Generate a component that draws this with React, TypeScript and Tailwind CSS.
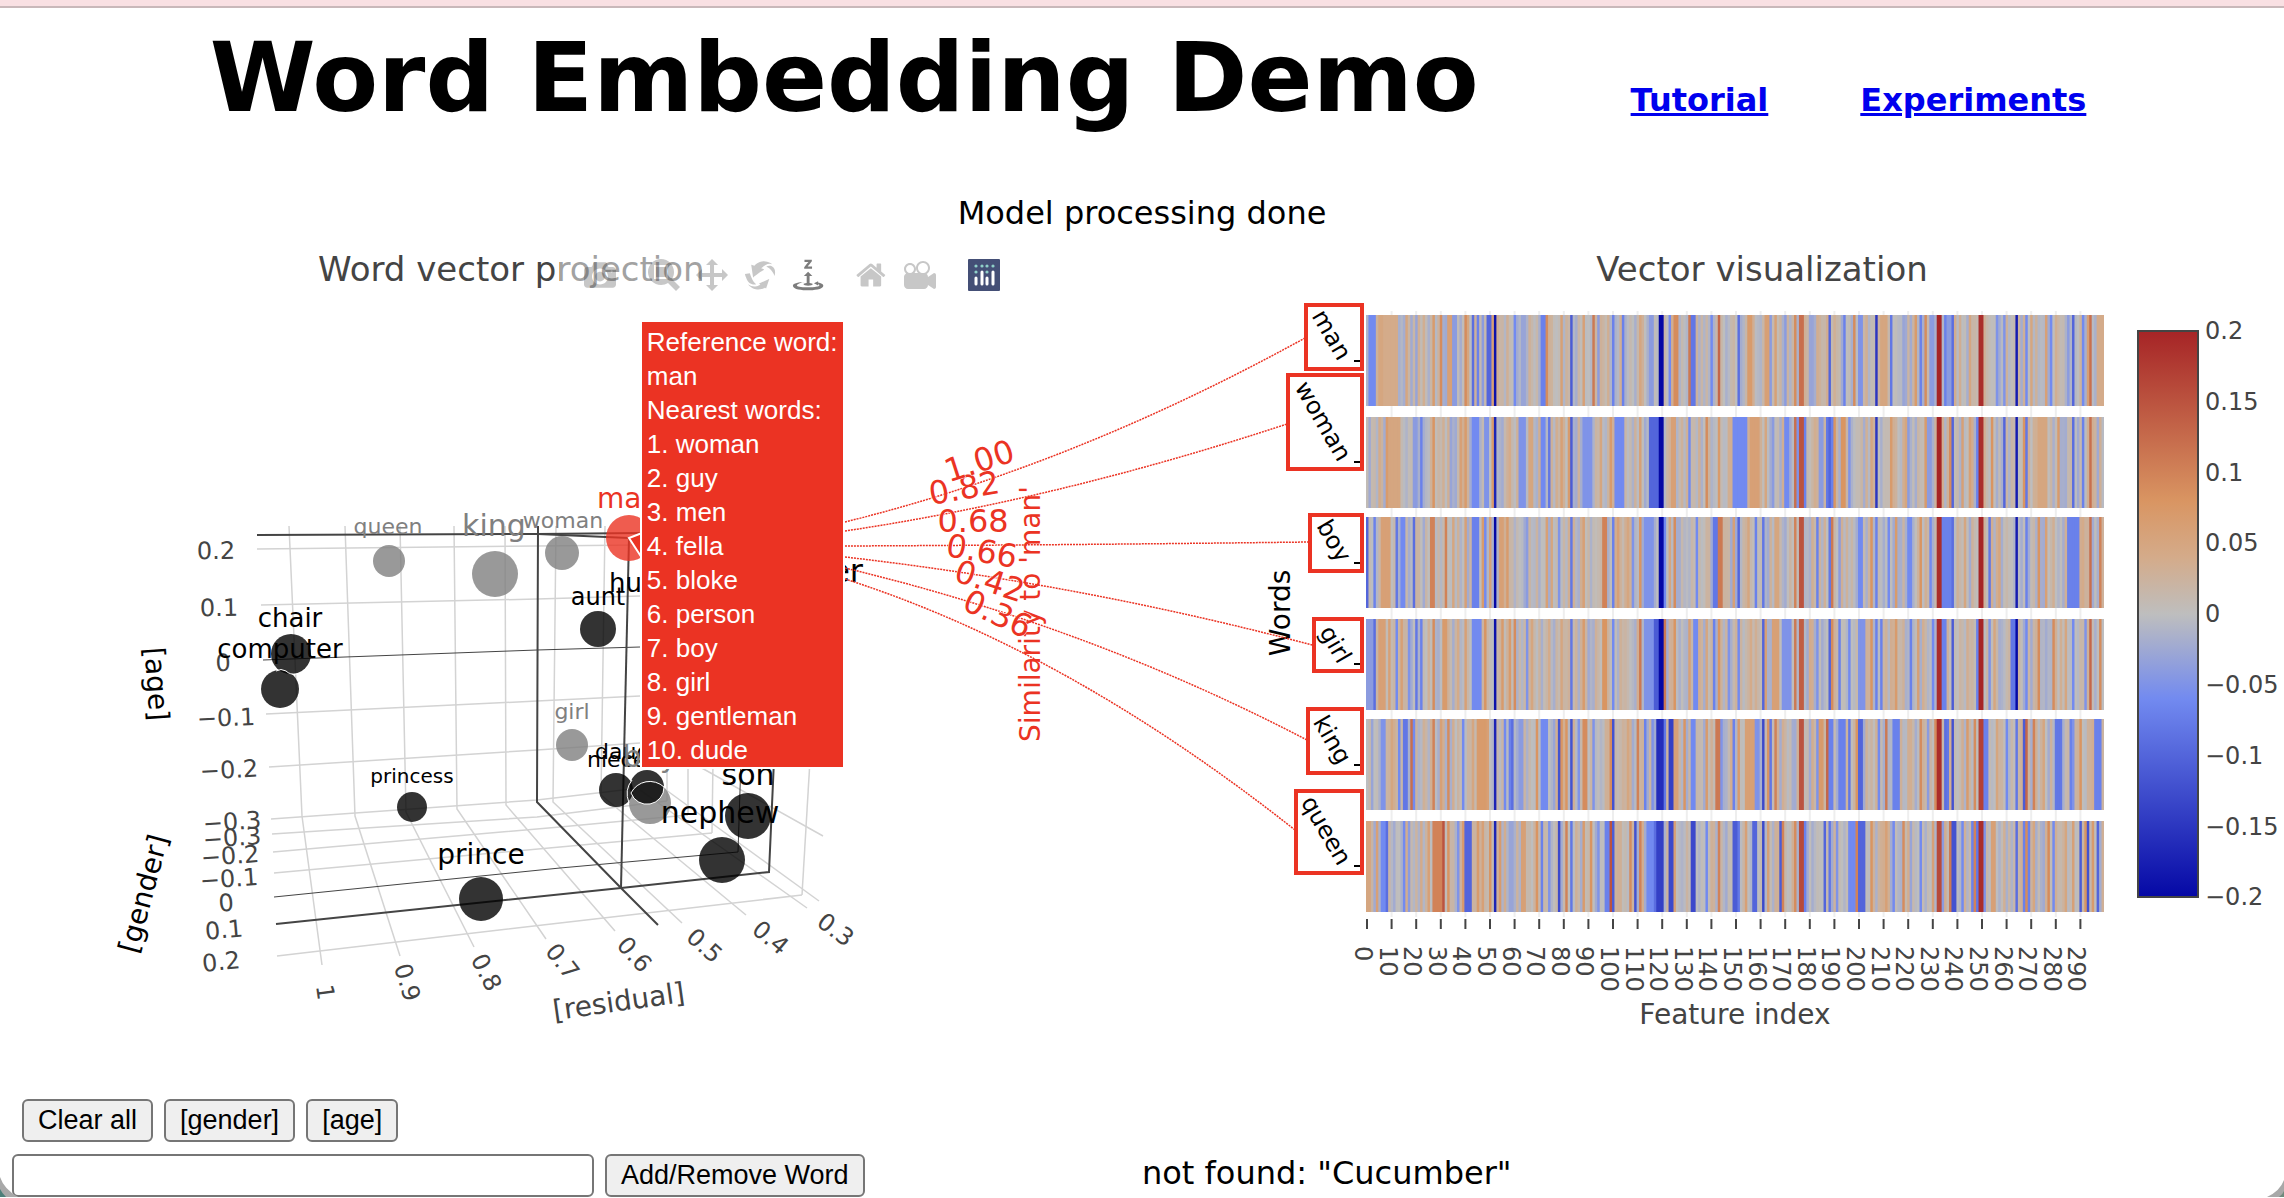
import React from "react";

type Feature = [start: number, span: number, value: number];

const FEATURE_COUNT = 300;
const CELL = 2.46;
const MAP_LEFT = 1366;

// "index:value" or "index+span:value", values in hundredths
const ROWS: { word: string; y: number; seed: number; data: string }[] = [
  {
    word: "man", y: 315, seed: 11,
    data: "1+3:-6 5+2:5 7+6:4 15:-2 16:5 20:-3 27:7 30:9 33+2:6 35+2:-4 40:9 41:5 43:-9 45:-7 47:-4 49+2:-10 51:6 52:-19 60:-6 63+2:-3 71+2:-7 73:9 79:6 83:-11 88:6 92:11 94:-4 100:-7 104:-7 111:5 115+2:-4 119+2:-20 123:-6 125+2:9 131:11 132+2:-8 140:-6 143:13 151:-9 155+2:7 162+2:6 164:-4 166:6 170:-4 174:9 176+2:12 180+2:-3 188:-10 194:-7 198:9 200+2:-5 207:-15 209+3:5 213:-8 218:-3 223:7 225:-7 227:9 229+2:-4 232+2:20 235:-7 236+2:-4 238:-9 245:5 249+2:19 256:-5 259:-5 264:-18 268:-6 270:5 276:6 278:-6 287:-10 285:-4 291:-6 293:6 294:12 297+3:4",
  },
  {
    word: "woman", y: 417, seed: 12,
    data: "5:4 8:7 9+5:5 19+2:-4 22:-7 27:8 34:-3 38:6 40:7 43+3:-6 48+2:-5 51:7 52:-17 58:4 62+3:-5 66+2:5 71+2:-6 74:-8 79:6 82:7 83:-11 88+4:-5 95:5 99:7 101+4:-6 111:6 115+4:-10 119+2:-20 124+2:6 131:-6 138:9 143:7 149+6:-6 156+4:6 162:5 165:-4 170+2:-6 174:12 175:-5 176+2:15 178:-7 184+2:-4 187:-8 188:-10 189:-7 190:8 193+2:8 196:-5 205:5 207:-15 213:7 219:5 220:-4 227:7 228+2:-4 232+2:20 237:9 238:-10 242:6 245:6 248:-7 249+2:19 254:8 259:-10 264:-18 267:8 268:-8 273+4:5 281:7 287:-9 291:-7 294:12",
  },
  {
    word: "boy", y: 517, seed: 13,
    data: "0:-10 3:-7 6+4:6 12:-8 14+2:-6 19:-9 26+2:10 32:10 35:5 40:6 43+3:-7 47:7 48:-6 50:6 52:-20 54+2:6 57:7 65:-4 73:6 75:5 78:-5 83:-8 88:6 96+2:10 100:-7 102:6 106:5 108:-5 111:8 113+4:-5 119+2:-20 121:-6 123:5 125:9 134:-6 141+2:-8 143+2:11 149:6 151:-10 155:5 158:-7 161:-8 166+2:5 174:10 176+2:15 183:-7 186:3 188:-8 189:11 192:-4 200+2:-6 205:8 207:-7 212:-6 215:7 220+2:-6 225:8 229:-6 232+2:19 234+4:-7 238:-9 243:5 249+2:20 253:-8 257:5 264:-18 268:-7 273:8 276:6 285+5:-7 291:4 294:12 298:10",
  },
  {
    word: "girl", y: 619, seed: 14,
    data: "0+3:-4 3:-9 5+3:6 9:6 12:-6 14:6 17:-5 20:-8 22:-7 27:9 31+2:7 37:4 40:6 43+4:-6 48:8 52:-19 55:7 58:7 60:9 65:-5 67:5 74:4 79:5 83:-8 88:7 96+2:8 100:-6 111:11 113+4:-5 117+2:-11 119+2:-20 121:11 125:8 131:6 133+2:-6 138:5 141:-7 143:8 147:-5 151:-6 156:4 161:-10 162:6 165+3:6 169+4:-5 174:11 176+2:14 180:4 183:-5 188:-10 189:9 192:-7 196:-6 200+3:-5 205:8 207:-7 209:-7 215:7 221:-7 224:6 230:-6 232+2:19 234+2:-7 238:-11 248:-7 249+2:20 253:-5 255:5 262+2:-8 264:-20 268:-6 273:9 279:9 284:5 287:-6 292:-5 294:13 298:9",
  },
  {
    word: "king", y: 719, seed: 15,
    data: "2:-3 6+2:-5 10:5 13:-6 15+2:-8 18:12 19:-6 27:10 30:6 33:9 39:-6 43:5 45+4:7 49:6 52:-17 56:-6 58:-7 59:-9 62+2:-4 69:8 71+3:-6 76:-3 78:-12 79:8 81:8 83:-12 86:-5 88+2:9 92:-5 99:9 100:-12 106:5 110:10 113:-7 116:-5 118+3:-16 121:-8 123+2:-14 125+2:6 129:8 132+2:-6 138:7 142+2:11 144:-5 149:-7 151:7 154+4:6 158+2:-5 161:-13 163:8 164:-8 166:10 176+2:15 183:-5 184+2:7 187:13 188+2:-7 192+3:-7 196:-8 199:8 200+2:-10 208:-6 211:11 214+3:-7 225:9 228:-4 231:9 232+2:19 235:-9 236:-8 238:-12 244:7 247:9 249+2:17 251+2:-7 256:5 260:-6 264:-8 267+2:-11 268:13 271:10 275:5 280+3:-8 286:-7 287:-5 290:8 296+3:-7",
  },
  {
    word: "queen", y: 821, seed: 16,
    data: "0+2:5 4:6 6+2:-6 8:-9 15:-6 17:-4 22:4 25:6 27+4:10 31:15 33:8 37:-5 39:7 40+3:-10 45:7 47:6 50:8 52:-17 54:7 58+2:-3 63+2:6 69:8 71:-7 74:-5 78:-13 81:10 83:-8 88:7 91:8 94:-5 97+2:-7 99:15 100:-11 107:9 109:-12 111:10 114+3:-6 117:-9 118+3:-14 123+2:-13 125:6 132+2:-13 138:-6 143:10 149+2:-11 151:-8 154:6 157+2:-10 161:-13 163:6 168:-11 169:10 174:9 176+2:16 178:-7 186:-10 188:-8 191:-5 196+3:-6 199:10 200+3:-10 205:8 211:6 214:-6 218:9 221:-3 225:-6 230:6 232+2:16 234:-4 237:11 238+2:-12 242:-6 246:-7 247:10 248:-8 249+2:19 251:-5 254+2:6 264:-9 267:-7 268:9 269:-7 271:5 277:9 279:-6 284:5 287:6 290:-11 292:8 293:-12 295:7 297:-10",
  },
];

const SCALE: [number, [number, number, number]][] = [
  [-20, [5, 8, 165]],
  [-6, [114, 138, 240]],
  [0, [190, 190, 190]],
  [4, [212, 171, 138]],
  [8, [217, 149, 98]],
  [20, [166, 36, 38]],
];

function color(v: number): string {
  const x = Math.max(-20, Math.min(20, v));
  for (let i = 1; i < SCALE.length; i++) {
    const [b, cb] = SCALE[i];
    if (x <= b) {
      const [a, ca] = SCALE[i - 1];
      const t = (x - a) / (b - a);
      const c = ca.map((n, k) => Math.round(n + (cb[k] - n) * t));
      return `rgb(${c[0]},${c[1]},${c[2]})`;
    }
  }
  return "rgb(166,36,38)";
}

function parse(data: string): Feature[] {
  return data.split(" ").map((part) => {
    const [pos, value] = part.split(":");
    const [start, span] = pos.split("+");
    return [Number(start), Number(span ?? 1), Number(value)];
  });
}

function rowValues(seed: number, data: string): number[] {
  let s = seed * 7919;
  const values = Array.from({ length: FEATURE_COUNT }, () => {
    s = (s * 1103515245 + 12345) % 2147483648;
    return (s / 2147483648) * 6 - 2.4;
  });
  for (const [start, span, value] of parse(data)) {
    for (let k = 0; k < span; k++) values[start + k] = value;
  }
  return values;
}

const LIGHT = "#d3d3d3";
const DARK = "#444444";

const GRID_LINES = [
  "257,549 537,546 640,545",
  "261,605 537,599 640,596",
  "266,714 537,701 640,696",
  "269,767 537,750 640,743",
  "271,819 537,800 640,788",
  "289,526 302,816 322,965",
  "345,526 355,816 400,956",
  "400,526 406,812 474,947",
  "454,526 457,809 546,939",
  "505,526 506,805 615,931",
  "556,526 553,802 682,923",
  "605,526 601,795 746,915",
  "640,790 807,908",
  "662,787 819,901",
  "700,767 823,836",
  "272,834 537,817 667,801",
  "273,852 560,827 688,815",
  "274,873 560,847 712,833",
  "277,956 560,923 802,895",
  "667,760 667,801",
  "688,760 688,815",
  "713,760 712,833",
  "810,760 802,895",
];

const DARK_LINES: [string, number][] = [
  ["257,535 538,534 640,533", 2],
  ["538,534 629,538", 2],
  ["263,660 537,650 640,647", 1],
  ["538,526 537,802 621,888 658,925", 2],
  ["629,538 621,888", 2],
  ["274,897 560,868 738,852 741,760", 1],
  ["276,924 621,888 769,872 774,760", 2],
];

const POINTS: [number, number, number, string][] = [
  [389, 561, 16, "#808080"],
  [495, 574, 23, "#808080"],
  [562, 553, 17, "#808080"],
  [598, 629, 18, "#000000"],
  [291, 654, 20, "#000000"],
  [280, 689, 19, "#000000"],
  [572, 745, 16, "#808080"],
  [412, 807, 15, "#000000"],
  [481, 899, 22, "#000000"],
  [650, 803, 21, "#808080"],
  [616, 790, 17, "#000000"],
  [647, 787, 17, "#000000"],
  [748, 816, 23, "#000000"],
  [722, 860, 23, "#000000"],
  [629, 538, 23, "#eb3323"],
];

const WORDS: [string, number, number, number, string, "start" | "middle" | "end"][] = [
  ["queen", 388, 534, 22, "#808080", "middle"],
  ["king", 494, 536, 30, "#808080", "middle"],
  ["woman", 563, 528, 22, "#808080", "middle"],
  ["man", 628, 508, 28, "#eb3323", "middle"],
  ["husband", 609, 592, 26, "#000000", "start"],
  ["father", 863, 582, 32, "#000000", "end"],
  ["aunt", 598, 605, 24, "#000000", "middle"],
  ["chair", 290, 627, 26, "#000000", "middle"],
  ["computer", 280, 658, 26, "#000000", "middle"],
  ["girl", 572, 719, 22, "#808080", "middle"],
  ["princess", 412, 783, 20, "#000000", "middle"],
  ["prince", 481, 864, 28, "#000000", "middle"],
  ["niece", 587, 767, 22, "#000000", "start"],
  ["daughter", 595, 759, 22, "#000000", "start"],
  ["boy", 650, 767, 30, "#808080", "middle"],
  ["son", 748, 785, 30, "#000000", "middle"],
  ["nephew", 720, 823, 30, "#000000", "middle"],
];

// label, centre x, centre y, rotation
const AXIS_TICKS: [string, number, number, number][] = [
  ["0.2", 216, 550, -1],
  ["0.1", 219, 607, -1],
  ["0", 223, 662, -2],
  ["−0.1", 226, 717, -2],
  ["−0.2", 229, 769, -3],
  ["−0.3", 232, 821, -4],
  ["−0.3", 232, 837, -4],
  ["−0.2", 230, 855, -4],
  ["−0.1", 229, 878, -4],
  ["0", 226, 902, -5],
  ["0.1", 224, 929, -5],
  ["0.2", 221, 961, -6],
  ["1", 326, 992, 82],
  ["0.9", 408, 982, 73],
  ["0.8", 487, 972, 63],
  ["0.7", 563, 961, 52],
  ["0.6", 635, 954, 48],
  ["0.5", 705, 945, 42],
  ["0.4", 771, 937, 40],
  ["0.3", 836, 929, 37],
];

const LINKS_TO_ROWS = [
  "M845 522Q1072 466 1305 338",
  "M845 531Q1060 499 1290 423",
  "M845 546Q1070 545 1308 542",
  "M845 557Q1081 584 1312 645",
  "M845 568Q1088 626 1307 740",
  "M845 579Q1067 650 1295 830",
];

const SCORES: [string, number, number, number][] = [
  ["0.82", 964, 487, -10],
  ["1.00", 979, 460, -18],
  ["0.68", 973, 520, 0],
  ["0.66", 982, 550, 10],
  ["0.42", 990, 580, 18],
  ["0.36", 998, 613, 25],
];

const BOXES: [string, number, number, number, number, number][] = [
  ["man", 1304, 303, 60, 68, 361],
  ["woman", 1286, 373, 78, 98, 462],
  ["boy", 1308, 513, 56, 60, 563],
  ["girl", 1312, 617, 52, 56, 664],
  ["king", 1306, 707, 58, 68, 765],
  ["queen", 1294, 789, 70, 86, 866],
];

const BAR_LABELS = ["0.2", "0.15", "0.1", "0.05", "0", "−0.05", "−0.1", "−0.15", "−0.2"];

const NEAREST = ["woman", "guy", "men", "fella", "bloke", "person", "boy", "girl", "gentleman", "dude"];

const ICONS = {
  camera:
    "m500 450c-83 0-150-67-150-150 0-83 67-150 150-150 83 0 150 67 150 150 0 83-67 150-150 150z m400 150h-120c-16 0-34 13-39 29l-31 93c-6 15-23 28-40 28h-340c-16 0-34-13-39-28l-31-94c-6-15-23-28-40-28h-120c-55 0-100-45-100-100v-450c0-55 45-100 100-100h800c55 0 100 45 100 100v450c0 55-45 100-100 100z m-400-550c-138 0-250 112-250 250 0 138 112 250 250 250 138 0 250-112 250-250 0-138-112-250-250-250z m365 380c-19 0-35 16-35 35 0 19 16 35 35 35 19 0 35-16 35-35 0-19-16-35-35-35z",
  zoom:
    "m1000-25l-250 251c40 63 63 138 63 218 0 224-182 406-407 406-224 0-406-182-406-406s183-406 407-406c80 0 155 22 218 62l250-250 125 125z m-812 250l0 438 437 0 0-438-437 0z m62 375l313 0 0-312-313 0 0 312z",
  pan:
    "m1000 350l-187 188 0-125-250 0 0 250 125 0-188 187-187-187 125 0 0-250-250 0 0 125-188-188 186-187 0 125 252 0 0-250-125 0 187-188 188 188-125 0 0 250 250 0 0-126 187 188z",
  orbit:
    "m922 660c-5 4-9 7-14 11-359 263-580-31-580-31l-102 28 58-400c0 1 1 1 2 2 118 108 351 249 351 249s-62 27-100 42c88 83 222 183 347 122 16-8 30-17 44-27-2 1-4 2-6 4z m36-329c0 0 64 229-88 296-62 27-124 14-175-11 157-78 225-208 249-266 8-19 11-31 11-31 2 5 6 15 11 32-5-13-8-20-8-20z m-775-239c70-31 117-50 198-32-121 80-199 346-199 346l-96-15-58-12c0 0 55-226 155-287z m603 133l-317-139c0 0 4-4 19-14 7-5 24-15 24-15s-177-147-389 4c235-287 536-112 536-112l31-22 100 299-4-1z m-298-153c6-4 14-9 24-15 0 0-17 10-24 15z",
  turntable:
    "m833 5l-17 108v41l-130-65 130-66c0 0 0 38 0 39 0-1 36-14 39-25 4-15-6-22-16-30-15-12-39-16-56-20-90-22-187-23-279-23-261 0-341 34-353 59 3 60 228 110 228 110-140-8-351-35-351-116 0-120 293-142 474-142 155 0 477 22 477 142 0 50-74 79-163 96z m-374 94c-58-5-99-21-99-40 0-24 65-43 144-43 79 0 143 19 143 43 0 19-42 34-98 40v216h87l-132 135-133-135h88v-216z m167 515h-136v1c16 16 31 34 46 52l84 109v54h-230v-71h124v-1c-16-17-28-32-44-51l-89-114v-51h245v72z",
  home:
    "m786 296v-267q0-15-11-26t-25-10h-214v214h-143v-214h-214q-15 0-25 10t-11 26v267q0 1 0 2t0 2l321 264 321-264q1-1 1-4z m124 39l-34-41q-5-5-12-6h-2q-7 0-12 3l-386 322-386-322q-7-4-13-4-7 2-12 7l-35 41q-4 5-3 13t6 12l401 334q18 15 42 15t43-15l136-114v109q0 8 5 13t13 5h107q8 0 13-5t5-13v-227l122-102q5-5 6-12t-4-13z",
  movie:
    "m938 413l-188-125c0 37-17 71-44 94 64 38 107 107 107 187 0 121-98 219-219 219-121 0-219-98-219-219 0-61 25-117 66-156h-115c30 33 49 76 49 125 0 103-84 187-187 187s-188-84-188-187c0-57 26-107 65-141-38-22-65-62-65-109v-250c0-70 56-126 125-126h500c69 0 125 56 125 126l188-126c34 0 62 28 62 63v375c0 35-28 63-62 63z m-750 0c-69 0-125 56-125 125s56 125 125 125 125-56 125-125-56-125-125-125z m406-1c-87 0-157 70-157 157 0 86 70 156 157 156s156-70 156-156-70-157-156-157z",
};

function ToolButton({ label, path, active = false }: { label: string; path: string; active?: boolean }) {
  return (
    <button type="button" aria-label={label} className="px-2 py-1">
      <svg viewBox="0 0 1000 1000" className="block size-8">
        <path d={path} transform="matrix(1 0 0 -1 0 850)" fill={DARK} fillOpacity={active ? 0.7 : 0.3} />
      </svg>
    </button>
  );
}

function ModeBar() {
  return (
    <div className="absolute top-[15px] left-[24.5%] flex gap-4 bg-white/50 pl-4">
      <div className="flex">
        <ToolButton label="Download plot as a png" path={ICONS.camera} />
      </div>
      <div className="flex">
        <ToolButton label="Zoom" path={ICONS.zoom} />
        <ToolButton label="Pan" path={ICONS.pan} />
        <ToolButton label="Orbital rotation" path={ICONS.orbit} />
        <ToolButton label="Turntable rotation" path={ICONS.turntable} active />
      </div>
      <div className="flex">
        <ToolButton label="Reset camera to default" path={ICONS.home} />
        <ToolButton label="Reset camera to last save" path={ICONS.movie} />
      </div>
      <a href="#plotly" aria-label="Produced with Plotly" className="px-2 py-1">
        <svg viewBox="0 0 32 32" className="block size-8">
          <rect width="32" height="32" rx="1" fill="#444f76" />
          <g fill="#8fd0c8">
            <circle cx="8" cy="7" r="1.6" />
            <circle cx="14" cy="7" r="1.6" />
            <circle cx="19" cy="7" r="1.6" />
            <circle cx="25" cy="7" r="1.6" />
            <circle cx="8" cy="13" r="1.6" />
            <circle cx="19" cy="13" r="1.6" />
          </g>
          <g stroke="#ffffff" strokeWidth="3" strokeLinecap="round">
            <path d="M8 19V25M14 13V25M19 19V25M25 13V25" />
          </g>
        </svg>
      </a>
    </div>
  );
}

function ScatterPlot() {
  return (
    <svg viewBox="0 240 1142 840" className="block w-full" role="img" aria-label="Word vector projection">
      <text x="318" y="281" fontSize="34" fill={DARK}>Word vector projection</text>
      <g fill="none" stroke={LIGHT} strokeWidth="1.5">
        {GRID_LINES.map((p) => <polyline key={p} points={p} />)}
      </g>
      <g fill="none" stroke={DARK}>
        {DARK_LINES.map(([p, w]) => <polyline key={p} points={p} strokeWidth={w} />)}
      </g>
      <g fontSize="24" fill={DARK} textAnchor="middle">
        {AXIS_TICKS.map(([t, x, y, r], i) => (
          <text key={i} transform={`translate(${x} ${y}) rotate(${r})`} y="9">{t}</text>
        ))}
      </g>
      <g fontSize="28" textAnchor="middle">
        <text transform="translate(155 684) rotate(86)" y="8">[age]</text>
        <text transform="translate(145 894) rotate(-75)" y="8">[gender]</text>
        <text transform="translate(619 1003) rotate(-8)" y="8" fill={DARK}>[residual]</text>
      </g>
      {POINTS.map(([x, y, r, fill]) => (
        <circle key={`${x}-${y}`} cx={x} cy={y} r={r} fill={fill} fillOpacity="0.8" />
      ))}
      <g fill="none" stroke="#ffffff" strokeWidth="1">
        <path d="M276 671Q281 668 286 671Q290 675 297 674" />
        <path d="M631 793A21 21 0 0 1 664 787A17 17 0 0 1 631 793" />
        <path d="M632 780Q624 790 629 803" />
      </g>
      {WORDS.map(([t, x, y, size, fill, anchor]) => (
        <text key={t} x={x} y={y} fontSize={size} fill={fill} textAnchor={anchor}>{t}</text>
      ))}
    </svg>
  );
}

function HeatMap() {
  const ticks = Array.from({ length: 30 }, (_, i) => i);
  return (
    <svg viewBox="1142 240 1142 840" className="block w-full" role="img" aria-label="Vector visualization">
      <defs>
        <linearGradient id="bar" x1="0" y1="0" x2="0" y2="1">
          {[...SCALE].reverse().map(([v]) => (
            <stop key={v} offset={(20 - v) / 40} stopColor={color(v)} />
          ))}
        </linearGradient>
      </defs>
      <text x="1762" y="281" fontSize="34" fill={DARK} textAnchor="middle">Vector visualization</text>
      <g stroke="#eeeeee" strokeWidth="2">
        {ticks.slice(1).map((i) => {
          const x = 1367 + i * 24.6;
          return <line key={i} x1={x} x2={x} y1="311" y2="917" />;
        })}
      </g>
      {ROWS.map(({ word, y, seed, data }) => (
        <g key={word}>
          {rowValues(seed, data).map((v, i) => (
            <rect
              key={i}
              x={MAP_LEFT + i * CELL}
              y={y}
              width={i === FEATURE_COUNT - 1 ? CELL : CELL + 1}
              height="91"
              fill={color(v)}
            />
          ))}
        </g>
      ))}
      <g stroke={DARK} strokeWidth="2">
        {ticks.map((i) => {
          const x = 1367 + i * 24.6;
          return <line key={i} x1={x} x2={x} y1="919" y2="929" />;
        })}
      </g>
      <g fontSize="24" fill={DARK}>
        {ticks.map((i) => (
          <text key={i} transform={`translate(${1355 + i * 24.6} 946) rotate(90)`}>{i * 10}</text>
        ))}
      </g>
      <text x="1735" y="1024" fontSize="28" fill={DARK} textAnchor="middle">Feature index</text>
      <text transform="translate(1290 613) rotate(-90)" fontSize="28" textAnchor="middle">Words</text>
      <rect x="2138" y="331" width="60" height="566" fill="url(#bar)" stroke={DARK} strokeWidth="2" />
      <g fontSize="24" fill={DARK}>
        {BAR_LABELS.map((t, i) => (
          <text key={t} x="2205" y={339 + i * 70.8}>{t}</text>
        ))}
      </g>
    </svg>
  );
}

function SimilarityLayer() {
  return (
    <svg viewBox="0 240 2284 840" className="pointer-events-none absolute inset-0 w-full" role="img" aria-label="Similarity to 'man'">
      <g fill="none" stroke="#eb3323" strokeWidth="1.5" strokeDasharray="2 1">
        {LINKS_TO_ROWS.map((d) => <path key={d} d={d} />)}
      </g>
      <text transform="translate(1040 614) rotate(-90)" fontSize="28" fill="#eb3323" textAnchor="middle">
        Similarity to 'man'
      </text>
      <g fontSize="32" fill="#eb3323" textAnchor="middle">
        {SCORES.map(([t, x, y, r]) => (
          <text
            key={t}
            transform={`translate(${x} ${y}) rotate(${r})`}
            y="12"
            stroke="#ffffff"
            strokeWidth="1"
            paintOrder="stroke"
          >
            {t}
          </text>
        ))}
      </g>
      {BOXES.map(([word, x, y, w, h, tick]) => (
        <g key={word}>
          <rect x={x + 2} y={y + 2} width={w - 4} height={h - 4} fill="#ffffff" stroke="#eb3323" strokeWidth="4" />
          <line x1="1354" x2="1360" y1={tick} y2={tick} stroke="#000000" strokeWidth="2" />
          <text transform={`translate(1338 ${tick + 1}) rotate(60)`} fontSize="24" textAnchor="end">{word}</text>
        </g>
      ))}
      <path d="M642 533L629 538L642 558" fill="#eb3323" stroke="#ffffff" strokeWidth="2" />
    </svg>
  );
}

function HoverCard() {
  return (
    <div className="absolute top-[82px] left-[28.1%] bg-[#eb3323] px-[5px] pt-[3px] font-['Liberation_Sans',Arial,sans-serif] text-[26px] leading-[34px] text-white outline-2 outline-white">
      <p>Reference word:</p>
      <p>man</p>
      <p>Nearest words:</p>
      {NEAREST.map((word, i) => (
        <p key={word}>{i + 1}. {word}</p>
      ))}
    </div>
  );
}

const buttonClass =
  "h-[43px] shrink-0 rounded-md border-2 border-[#767676] bg-[#efefef] px-[14px] font-['Liberation_Sans',Arial,sans-serif] text-[27px] leading-none";

export default function App() {
  return (
    <div className="relative overflow-hidden bg-white font-['DejaVu_Sans',Verdana,sans-serif] text-black">
      <div className="h-2 border-b-2 border-[#c9b8ba] bg-[#f9e0e3]" />
      <header className="flex items-baseline justify-center gap-[92px] pt-[10px] pl-3">
        <h1 className="mr-[60px] text-[96px] leading-[120px] font-bold">Word Embedding Demo</h1>
        <a href="#tutorial" className="text-[32px] font-bold text-[#0000ee] underline">Tutorial</a>
        <a href="#experiments" className="text-[32px] font-bold text-[#0000ee] underline">Experiments</a>
      </header>
      <p role="status" className="pt-[55px] pb-[7px] text-center text-[32px] leading-10">Model processing done</p>
      <main>
        <section className="relative grid grid-cols-2">
          <ScatterPlot />
          <HeatMap />
          <SimilarityLayer />
          <ModeBar />
          <HoverCard />
        </section>
        <section className="grid grid-cols-2 items-end pt-[19px]">
          <div className="flex flex-col gap-3">
            <div className="flex gap-[11px] pl-[22px]">
              <button type="button" className={buttonClass}>Clear all</button>
              <button type="button" className={buttonClass}>[gender]</button>
              <button type="button" className={buttonClass}>[age]</button>
            </div>
            <form className="flex gap-[11px] pl-3" onSubmit={(e) => e.preventDefault()}>
              <input
                type="text"
                aria-label="Word"
                className="h-[43px] w-[51.5%] rounded-md border-2 border-[#767676] bg-white px-1 text-[26px]"
              />
              <button type="submit" className={buttonClass}>Add/Remove Word</button>
            </form>
          </div>
          <p className="text-[32px] leading-[48px]">not found: "Cucumber"</p>
        </section>
      </main>
      <svg viewBox="0 0 20 20" className="absolute bottom-0 left-0 size-5" aria-hidden="true">
        <path d="M0 0Q4 12 18 20H0Z" fill="#a8a8a8" />
        <path d="M0 12Q2 16 6 20H0Z" fill="#4d7f79" />
      </svg>
      <svg viewBox="0 0 20 20" className="absolute right-0 bottom-0 size-5" aria-hidden="true">
        <path d="M20 3Q16 14 3 20H20Z" fill="#a8a8a8" />
        <path d="M20 14Q19 17 15 20H20Z" fill="#6f8a7c" />
      </svg>
    </div>
  );
}
